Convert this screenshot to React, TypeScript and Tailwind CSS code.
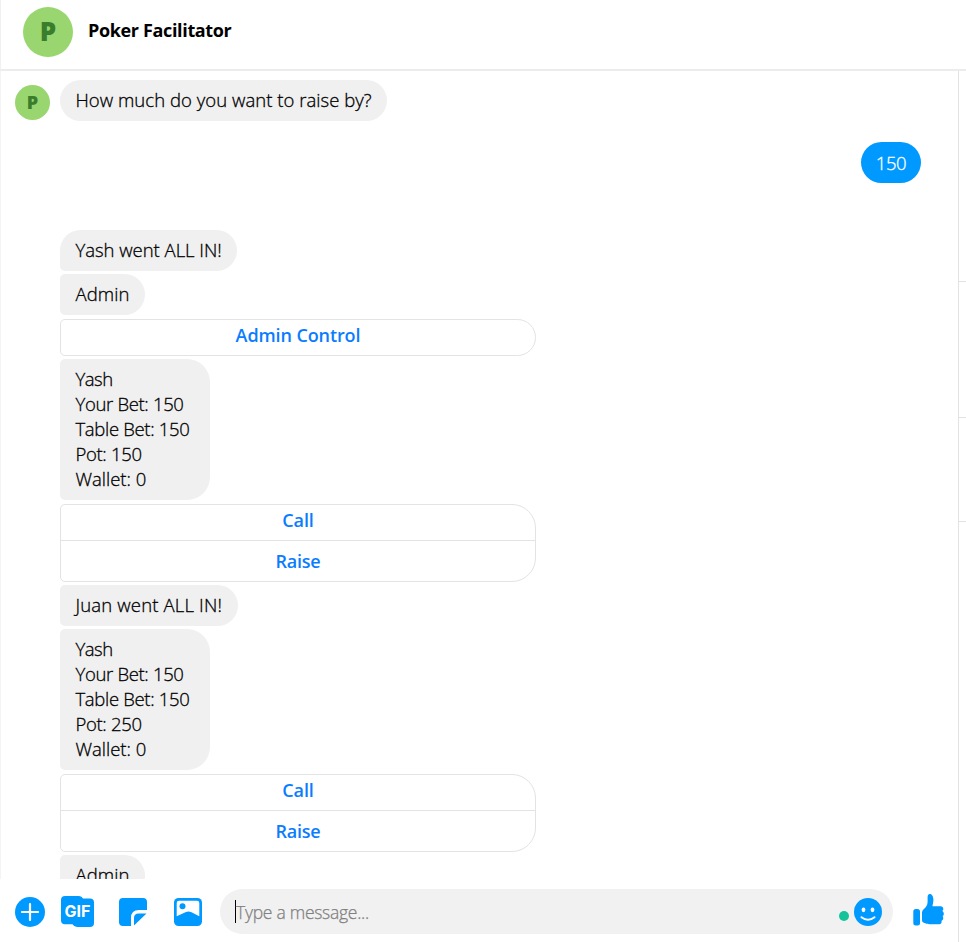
import type { ReactNode } from 'react';

const light = 'text-[18.5px] leading-[25px] font-light [-webkit-text-stroke:0.3px_currentColor]';

function Avatar({ large = false }: { large?: boolean }) {
  return (
    <div
      className={
        large
          ? 'flex h-[50px] w-[50px] shrink-0 items-center justify-center rounded-full bg-[#99d66f] pb-px text-[26px] font-extrabold text-[#3a7d2c]'
          : 'flex h-[35px] w-[35px] shrink-0 items-center justify-center rounded-full bg-[#99d66f] text-[18px] font-extrabold text-[#3a7d2c]'
      }
    >
      P
    </div>
  );
}

function Bubble({ className, children }: { className: string; children: ReactNode }) {
  return (
    <div className={`shrink-0 whitespace-nowrap bg-[#f0f0f0] pr-4 pl-[15.5px] pt-[7px] pb-[9px] text-black ${light} ${className}`}>{children}</div>
  );
}

function Status({ pot }: { pot: number }) {
  return (
    <Bubble className="mt-[3px] h-[141px] w-[150px] rounded-l-[5px] rounded-r-[23px]">
      <p className="tracking-[-0.5px]">Yash</p>
      <p className="tracking-[-0.33px]">Your Bet: 150</p>
      <p className="tracking-[-0.33px]">Table Bet: 150</p>
      <p className="tracking-[-0.33px]">Pot: {pot}</p>
      <p className="tracking-[0px]">Wallet: 0</p>
    </Bubble>
  );
}

function Actions() {
  return (
    <div className="mt-1 flex h-[78px] w-[476px] shrink-0 flex-col rounded-l-[5px] rounded-r-[24px] border border-[#e3e3e3] text-center text-[18px] font-semibold text-[#0a7cff]">
      <button className="h-[36px] border-b border-[#e3e3e3] pb-1 leading-[31px] tracking-[-0.15px]">Call</button>
      <button className="h-[40px] leading-[40px] tracking-[-0.2px]">Raise</button>
    </div>
  );
}

export default function App() {
  return (
    <div className="flex h-[942px] w-[966px] flex-col overflow-hidden bg-white font-['Open_Sans','Noto_Sans',sans-serif]">
      <header className="flex h-[71px] shrink-0 items-start gap-[15px] border-b-2 border-l border-b-[#ececec] border-l-[#f0f0f0] pt-[7px] pl-[22px]">
        <Avatar large />
        <h1 className="pt-[11px] text-[18px] leading-[25px] font-bold tracking-[-0.35px] text-black">Poker Facilitator</h1>
      </header>
      <div className="flex min-h-0 flex-1">
        <div className="flex w-[958px] flex-col">
          <main className="flex h-[808px] shrink-0 flex-col items-start overflow-hidden border-l border-[#f4f4f4] pt-[9px] pl-[14px]">
            <div className="flex shrink-0 items-start gap-[10px]">
              <div className="pt-[5px]"><Avatar /></div>
              <Bubble className="h-[41px] w-[327px] rounded-full tracking-[0.04px]">How much do you want to raise by?</Bubble>
            </div>
            <div className={`mt-[21px] mr-[37px] h-[41px] w-[60px] shrink-0 self-end rounded-full bg-[#0099ff] py-2 text-center text-white ${light}`}>
              <span className="tracking-[-0.4px]">150</span>
            </div>
            <div className="mt-[47px] flex flex-col items-start pl-[45px]">
              <Bubble className="h-[41px] w-[177px] rounded-t-[21px] rounded-br-[21px] rounded-bl-[5px] tracking-[-0.03px]">Yash went ALL IN!</Bubble>
              <Bubble className="mt-[3px] h-[41px] w-[85px] rounded-l-[5px] rounded-r-[21px] tracking-[0.1px]">Admin</Bubble>
              <button className="mt-1 h-[37px] w-[476px] shrink-0 rounded-l-[5px] rounded-r-[19px] border border-[#e3e3e3] pb-[5px] text-center text-[18px] leading-[30px] font-semibold tracking-[-0.1px] text-[#0a7cff]">Admin Control</button>
              <Status pot={150} />
              <Actions />
              <Bubble className="mt-[3px] h-[41px] w-[178px] rounded-l-[5px] rounded-r-[21px] tracking-[0.16px]">Juan went ALL IN!</Bubble>
              <Status pot={250} />
              <Actions />
              <Bubble className="mt-[3px] h-[41px] w-[85px] rounded-l-[5px] rounded-r-[21px] tracking-[0.1px]">Admin</Bubble>
            </div>
          </main>
          <footer className="flex h-[63px] shrink-0 items-start pt-[10px] pl-[15px] text-[#0099ff]">
            <svg className="mt-[8px] h-[30px] w-[30px]" viewBox="0 0 30 30">
              <circle cx="15" cy="15" r="15" fill="currentColor" />
              <path d="M15 7v16M7 15h16" stroke="white" strokeWidth="2.2" strokeLinecap="round" />
            </svg>
            <div className="mt-[7px] ml-4 grid h-[31px] w-[33px] place-items-center">
              <svg className="col-start-1 row-start-1 h-[31px] w-[33px]" viewBox="0 0 33 31">
                <path d="M4 0h14q3 0 4 2.6h7q4 0 4 4V27q0 4-4 4H16q-3 0-4.500-2.700H4q-4 0-4-4V4q0-4 4-4Z" fill="currentColor" />
              </svg>
              <span className="col-start-1 row-start-1 pb-px font-[Inter] text-[16px] leading-none font-bold text-white">GIF</span>
            </div>
            <svg className="mt-[9px] ml-[25px] h-[28px] w-[28px]" viewBox="0 0 28 28" fill="currentColor">
              <path d="M4 0h20q4 0 4 4v8H20q-8 0-8 8V28H4q-4 0-4-4V4q0-4 4-4Z" />
              <path d="M27.500 15.500 15 27.500V20q0-4.500 4.500-4.500Z" />
            </svg>
            <svg className="mt-[9px] ml-[26.5px] h-[28px] w-[28px]" viewBox="0 0 28 28">
              <rect width="28" height="28" rx="4.500" fill="currentColor" />
              <path d="M5 2.700h18q2.300 0 2.300 2.300v13.300l-8.300-4.300q-2.600-1.100-5 0l-9.300 4.300V5q0-2.300 2.300-2.300Z" fill="white" />
              <circle cx="8.500" cy="8.200" r="3" fill="currentColor" />
            </svg>
            <div className="ml-[18.5px] flex h-[45px] w-[673px] items-center rounded-full bg-[#f1f1f1] pr-[11px] pl-[15px]">
              <span className="mb-[1px] h-[23px] w-px bg-black" />
              <span className="flex-1 pt-px text-[17.5px] leading-[25px] font-light tracking-[-0.27px] text-[#808080] [-webkit-text-stroke:0.25px_currentColor]">Type a message...</span>
              <span className="mt-[8px] h-[10px] w-[10px] rounded-full bg-[#15c39a]" />
              <svg className="ml-[5.5px] h-[28px] w-[28px]" viewBox="0 0 28 28">
                <circle cx="14" cy="14" r="14" fill="currentColor" />
                <ellipse cx="9.500" cy="11.800" rx="1.900" ry="2.400" fill="white" />
                <ellipse cx="18.500" cy="11.800" rx="1.900" ry="2.400" fill="white" />
                <path d="M7.500 19.200q6.500 5 13 0" fill="none" stroke="white" strokeWidth="2" strokeLinecap="round" />
              </svg>
            </div>
            <svg className="mt-[5px] ml-[20px] h-[32px] w-[31px]" viewBox="0 0 31 32" fill="currentColor">
              <rect x="0.300" y="15" width="6.700" height="16.500" rx="2.500" />
              <path d="M9 18.500q0-2 1.600-3.200c2.500-2 3.900-4.200 4-7.300V3c0-1.800 1-3 2.200-3 2.300 0 3.600 2.500 3.600 5.500 0 2.700-.6 5-1 6.800h8.100c3 0 3.700 3.700 1.700 4.700 2.300 1.400 1.900 4.200.4 5.100 1.300 1.800.6 4.100-1.100 4.800.5 2.400-.7 3.400-3.400 3.400H18c-4.500 0-6.200-1.200-7.700-1.800Q9 28 9 26Z" />
            </svg>
          </footer>
        </div>
        <aside className="flex w-2 flex-col border-l border-[#e2e2e2]">
          <div className="h-[211px] shrink-0 border-b border-[#e2e2e2]" />
          <div className="h-[136px] shrink-0 border-b border-[#e2e2e2]" />
          <div className="h-[104px] shrink-0 border-b border-[#e2e2e2]" />
        </aside>
      </div>
    </div>
  );
}
